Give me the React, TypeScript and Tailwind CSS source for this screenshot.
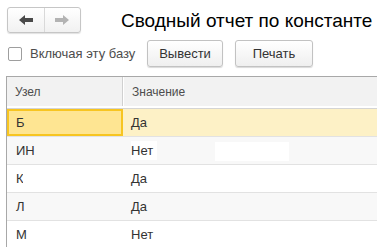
import React from "react";

const rows = [
  { node: "ИН", value: "Нет", shade: true },
  { node: "К", value: "Да", shade: false },
  { node: "Л", value: "Да", shade: true },
  { node: "М", value: "Нет", shade: false },
];

function Arrow({ dir, color }: { dir: "left" | "right"; color: string }) {
  return (
    <svg width="14" height="10" viewBox="0 0 14 10" className={dir === "right" ? "rotate-180" : ""}>
      <path d="M0 5 L6 0 L6 3 L14 3 L14 7 L6 7 L6 10 Z" fill={color} />
    </svg>
  );
}

export default function App() {
  return (
    <div className="w-[377px] h-[247px] bg-white overflow-hidden text-[#333] font-['Liberation_Sans',Arial,sans-serif]">
      <div className="flex items-center pt-[7px] pl-[7px] h-[33px]">
        <div className="flex h-[26px] w-[74px] rounded-[3px] border border-[#c6c6c6] bg-gradient-to-b from-white to-[#f1f1f1] shadow-[0_1px_1px_rgba(0,0,0,0.12)]">
          <div className="flex-1 flex items-center justify-center border-r border-[#d9d9d9]">
            <Arrow dir="left" color="#4a4a4a" />
          </div>
          <div className="flex-1 flex items-center justify-center">
            <Arrow dir="right" color="#b3b3b3" />
          </div>
        </div>
        <div className="ml-[40px] text-[19px] leading-none text-black mt-[1px] whitespace-nowrap">Сводный отчет по константе</div>
      </div>

      <div className="flex items-center mt-[7px] h-[27px]">
        <div className="ml-[8px] w-[14px] h-[14px] rounded-[2px] border border-[#9e9e9e] bg-white" />
        <span className="ml-[8px] w-[109px] text-[13px] text-[#4d4d4d] whitespace-nowrap">Включая эту базу</span>
        <button className="ml-[8px] w-[76px] h-[27px] rounded-[3px] border border-[#c2c2c2] bg-gradient-to-b from-white to-[#efefef] shadow-[0_1px_1px_rgba(0,0,0,0.15)] text-[13px] text-[#333]">
          Вывести
        </button>
        <button className="ml-[12px] w-[78px] h-[27px] rounded-[3px] border border-[#c2c2c2] bg-gradient-to-b from-white to-[#efefef] shadow-[0_1px_1px_rgba(0,0,0,0.15)] text-[13px] text-[#333]">
          Печать
        </button>
      </div>

      <div className="ml-[6px] mt-[9px] border-l border-[#a8a8a8]">
        <div className="border-t border-[#a8a8a8]">
          <div className="flex h-[29px] bg-[#f2f2f2] text-[12px] text-[#4d4d4d]">
            <div className="w-[116px] flex items-center pl-[8px] border-r border-[#d0d0d0]">Узел</div>
            <div className="flex-1 flex items-center pl-[8px] border-l border-white">Значение</div>
          </div>
          <div className="h-[2px] bg-white" />
          <div className="h-[1px] bg-[#d4d4d4]" />
        </div>

        <div className="flex h-[28px] bg-[#fdf1c6] border-b border-[#e2e2e2] text-[13px]">
          <div className="w-[116px] flex items-center pl-[7px] bg-[#fee592] border-2 border-[#f7c521]">Б</div>
          <div className="flex-1 flex items-center pl-[8px]">Да</div>
        </div>

        {rows.map((r, i) => (
          <div
            key={r.node}
            className={`flex h-[28px] border-b border-[#e2e2e2] text-[13px] ${r.shade ? "bg-[#f8f8f8]" : "bg-white"}`}
          >
            <div className="w-[116px] flex items-center pl-[9px] relative">
              {r.node}
              {i === 1 && <div className="absolute left-[16px] top-0 w-[74px] h-[19px] bg-white" />}
              {i === 3 && <div className="absolute left-[20px] top-[6px] w-[75px] h-[22px] bg-white" />}
            </div>
            <div className="flex-1 flex items-center pl-[8px] relative">
              {i === 0 && (
                <>
                  <span className="bg-white pr-[4px]">{r.value}</span>
                  <div className="absolute left-[92px] top-[5px] w-[74px] h-[19px] bg-white" />
                </>
              )}
              {i !== 0 && r.value}
            </div>
          </div>
        ))}
      </div>
    </div>
  );
}
